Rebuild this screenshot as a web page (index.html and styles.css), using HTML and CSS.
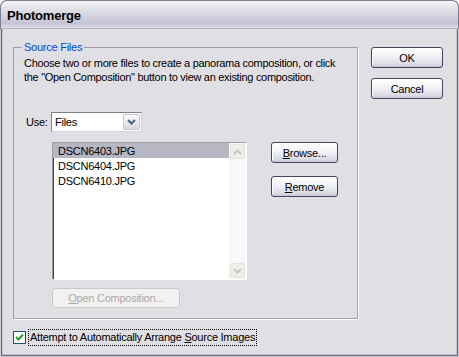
FILE: index.html
```html
<!DOCTYPE html>
<html lang="en">

<head>
    <meta charset="utf-8">
    <meta name="viewport" content="width=device-width, initial-scale=1.0">
    <title>Photomerge</title>
    <link rel="stylesheet" href="styles.css">
</head>

<body>
    <div class="window">
        <div class="titlebar">Photomerge</div>

        <div class="content">
            <div class="main">
                <fieldset class="group">
                    <legend>Source Files</legend>
                    <p class="desc">Choose two or more files to create a panorama composition, or click<br>the "Open Composition" button to view an existing composition.</p>

                    <div class="use-row">
                        <span class="use-label">Use:</span>
                        <div class="select">
                            <span class="select-value">Files</span>
                            <span class="select-btn">
                                <svg width="9" height="6" viewBox="0 0 9 6"><polyline points="1,1 4.5,4.5 8,1" fill="none" stroke="#4d6185" stroke-width="2"/></svg>
                            </span>
                        </div>
                    </div>

                    <div class="files-row">
                        <div class="listbox">
                            <ul class="items">
                                <li class="selected">DSCN6403.JPG</li>
                                <li>DSCN6404.JPG</li>
                                <li>DSCN6410.JPG</li>
                            </ul>
                            <div class="scrollbar">
                                <span class="arrow">
                                    <svg width="9" height="6" viewBox="0 0 9 6"><polyline points="1,5 4.5,1.5 8,5" fill="none" stroke="#c9c8c0" stroke-width="2"/></svg>
                                </span>
                                <span class="arrow">
                                    <svg width="9" height="6" viewBox="0 0 9 6"><polyline points="1,1 4.5,4.5 8,1" fill="none" stroke="#c9c8c0" stroke-width="2"/></svg>
                                </span>
                            </div>
                        </div>
                        <div class="side-buttons">
                            <button class="btn btn-side"><u>B</u>rowse...</button>
                            <button class="btn btn-side"><u>R</u>emove</button>
                        </div>
                    </div>

                    <button class="btn btn-open" disabled><u>O</u>pen Composition...</button>
                </fieldset>

                <div class="dialog-buttons">
                    <button class="btn btn-dialog">OK</button>
                    <button class="btn btn-dialog">Cancel</button>
                </div>
            </div>

            <label class="check-row">
                <span class="checkbox">
                    <svg width="11" height="11" viewBox="0 0 11 11"><polyline points="2,5 4.5,7.5 9,2.5" fill="none" stroke="#21a121" stroke-width="2"/></svg>
                </span>
                <span class="check-label">Attempt to Automatically Arrange <u>S</u>ource Images</span>
            </label>
        </div>
    </div>
</body>

</html>
```

FILE: styles.css
```css
* {
    box-sizing: border-box;
}

body {
    margin: 0;
    background: #ffffff;
    font-family: 'Liberation Sans', Arial, sans-serif;
    font-size: 11px;
    letter-spacing: -0.25px;
    color: #000000;
}

.window {
    width: 459px;
    height: 357px;
    background: #e0dfe3;
    border-radius: 7px 7px 0 0;
    overflow: hidden;
    box-shadow: inset 0 0 0 1px #c9c9d3, inset 0 0 0 2px #6c6c7e, inset 0 0 0 3px #c3c3d0;
}

.titlebar {
    height: 29px;
    padding: 7px 0 0 6px;
    border: 1px solid #7c7c8e;
    border-bottom: 0;
    border-radius: 7px 7px 0 0;
    background: linear-gradient(#f6f6f9 0%, #e6e6ee 20%, #d2d2de 55%, #c4c4d4 80%, #dedee8 95%, #9a9aac 100%);
    font-size: 13px;
    font-weight: bold;
    letter-spacing: -0.2px;
    line-height: 16px;
}

.content {
    padding: 12px 16px 0 13px;
}

.main {
    display: flex;
    align-items: flex-start;
}

/* group box */
.group {
    width: 345px;
    margin: 0;
    padding: 2px 10px 10px 10px;
    border: 1px solid #9c9ca6;
    box-shadow: 1px 1px 0 #ffffff;
}

.group legend {
    padding: 0 2px;
    margin-left: -2px;
    color: #0046d5;
    line-height: 13px;
}

.desc {
    margin: 0;
    line-height: 14px;
    letter-spacing: -0.3px;
    white-space: nowrap;
}

.use-row {
    display: flex;
    align-items: center;
    margin-top: 28px;
    height: 20px;
}

.use-label {
    width: 27px;
    padding-left: 2px;
}

.select {
    display: flex;
    align-items: center;
    width: 91px;
    height: 20px;
    padding: 1px;
    background: #ffffff;
    border: 1px solid #7f7f8a;
    border-right-color: #d4d4dc;
    border-bottom-color: #d4d4dc;
}

.select-value {
    flex: 1;
    padding-left: 2px;
}

.select-btn {
    display: flex;
    align-items: center;
    justify-content: center;
    width: 17px;
    height: 16px;
    border: 1px solid #c2c2d0;
    border-radius: 2px;
    background: linear-gradient(#fbfbfd, #d8d8e4);
}

.files-row {
    display: flex;
    align-items: flex-start;
    margin-top: 10px;
}

.listbox {
    display: flex;
    width: 195px;
    height: 138px;
    margin-left: 28px;
    background: #ffffff;
    border: 1px solid #9a9aa2;
    border-right-color: #ffffff;
    border-bottom-color: #ffffff;
    box-shadow: inset 1px 1px 0 #404040;
}

.items {
    flex: 1;
    margin: 0;
    padding: 0;
    list-style: none;
}

.items li {
    height: 15px;
    padding: 1px 0 0 5px;
    line-height: 15px;
}

.items .selected {
    background: #b7b7c3;
}

.scrollbar {
    display: flex;
    flex-direction: column;
    justify-content: space-between;
    width: 17px;
    padding: 1px;
    background: #f7f8fc;
}

.arrow {
    display: flex;
    align-items: center;
    justify-content: center;
    width: 15px;
    height: 15px;
    border: 1px solid #e4e3dc;
    border-radius: 2px;
    background: #efeee8;
}

/* buttons */
.btn {
    font-family: 'Liberation Sans', Arial, sans-serif;
    font-size: 11px;
    letter-spacing: -0.25px;
    color: #000000;
    padding: 0;
    border: 1px solid #44445e;
    border-radius: 3px;
    background: linear-gradient(#ffffff 0%, #f4f4f8 40%, #dcdce6 85%, #c6c6d6 100%);
    box-shadow: inset 1px 1px 0 #ffffff;
}

.side-buttons {
    display: flex;
    flex-direction: column;
    gap: 13px;
    margin-left: 24px;
}

.btn-side {
    width: 67px;
    height: 21px;
}

.btn-open {
    width: 128px;
    height: 20px;
    margin-top: 8px;
    margin-left: 28px;
    color: #aaa9a4;
    border-color: #c9c9c6;
    background: #f1f1f1;
    box-shadow: none;
}

.dialog-buttons {
    display: flex;
    flex-direction: column;
    gap: 10px;
    margin-left: 13px;
    padding-top: 6px;
}

.btn-dialog {
    width: 72px;
    height: 21px;
}

/* checkbox */
.check-row {
    display: flex;
    align-items: center;
    margin-top: 10px;
}

.checkbox {
    display: flex;
    align-items: center;
    justify-content: center;
    width: 13px;
    height: 13px;
    background: #ffffff;
    border: 1px solid #1c5180;
}

.check-label {
    margin-left: 2px;
    padding: 0 1px;
    line-height: 15px;
    border: 1px dotted #000000;
}
```
